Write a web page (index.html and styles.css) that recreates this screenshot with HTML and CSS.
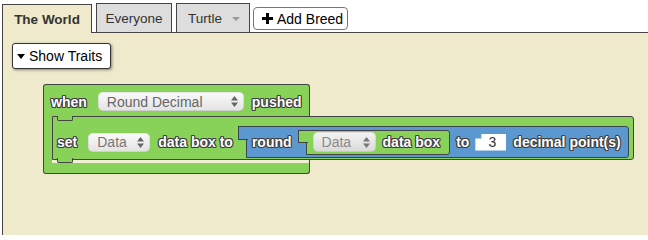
FILE: index.html
```html
<!DOCTYPE html>
<html>
<head>
<meta charset="utf-8">
<link rel="stylesheet" href="styles.css">
</head>
<body>
<div class="tabs">
  <div class="tab active">The World</div>
  <div class="tab everyone">Everyone</div>
  <div class="tab turtle"><span>Turtle</span><svg class="tcaret" width="8" height="4" viewBox="0 0 8 4"><path d="M0 0H8L4 4Z" fill="#999"/></svg></div>
  <button class="add-breed"><svg width="11" height="11" viewBox="0 0 11 11"><path d="M4 0H7V4H11V7H7V11H4V7H0V4H4Z" fill="#000"/></svg><span>Add Breed</span></button>
</div>
<div class="content">
  <button class="show-traits"><svg width="8" height="5" viewBox="0 0 8 5"><path d="M0 0H8L4 5Z" fill="#000"/></svg><span>Show Traits</span></button>
  <div class="when">
    <div class="when-top">
      <span class="lbl">when</span>
      <div class="dd dd-event"><span>Round Decimal</span><svg width="7" height="11" viewBox="0 0 7 11"><path d="M0 4.5L3.5 0L7 4.5Z M0 6.5L3.5 11L7 6.5Z" fill="#666"/></svg></div>
      <span class="lbl pushed">pushed</span>
    </div>
    <div class="middle">
      <div class="arm"></div>
      <div class="set">
        <span class="lbl">set</span>
        <div class="dd dd-data"><span>Data</span><svg width="7" height="11" viewBox="0 0 7 11"><path d="M0 4.5L3.5 0L7 4.5Z M0 6.5L3.5 11L7 6.5Z" fill="#666"/></svg></div>
        <span class="lbl databoxto">data box to</span>
        <div class="round">
          <span class="lbl">round</span>
          <div class="datablock">
            <div class="dd dd-inner"><span>Data</span><svg width="7" height="11" viewBox="0 0 7 11"><path d="M0 4.5L3.5 0L7 4.5Z M0 6.5L3.5 11L7 6.5Z" fill="#777"/></svg></div>
            <span class="lbl">data box</span>
          </div>
          <span class="lbl to">to</span>
          <div class="num">3</div>
          <span class="lbl dp">decimal point(s)</span>
        </div>
      </div>
    </div>
    <div class="bottom"></div>
  </div>
</div>
</body>
</html>
```
FILE: styles.css
```css
* { box-sizing: border-box; }
body {
  margin: 0;
  width: 648px;
  height: 235px;
  overflow: hidden;
  background: #fff;
  font-family: "Liberation Sans", Arial, sans-serif;
}
.tabs {
  display: flex;
  align-items: flex-end;
  height: 32px;
  padding-left: 2px;
}
.tab {
  height: 29px;
  border: 1px solid #444;
  border-bottom: none;
  background: #dddddd;
  color: #333;
  font-size: 13.5px;
  display: flex;
  align-items: center;
  justify-content: center;
  margin-right: 4px;
}
.tab.active {
  width: 90px;
  margin-bottom: -1px;
  background: #efeacb;
  font-weight: bold;
  position: relative;
  z-index: 1;
}
.tab.everyone { width: 76px; }
.tab.turtle {
  width: 74px;
  justify-content: space-between;
  padding: 0 9px 0 11px;
  margin-right: 3px;
}
.tcaret { margin-top: 1px; }
.add-breed {
  width: 95px;
  height: 23px;
  margin-bottom: 2px;
  display: flex;
  align-items: center;
  gap: 4px;
  padding: 0 0 0 8px;
  background: #fff;
  border: 1px solid #777;
  border-radius: 4px;
  font-family: "Liberation Sans", Arial, sans-serif;
  font-size: 14px;
  color: #000;
}
.content {
  position: relative;
  margin-left: 2px;
  height: 203px;
  border-left: 1px solid #444;
  border-top: 1px solid #444;
  background: #efeacb;
  padding: 10px 0 0 9px;
}
.show-traits {
  width: 99px;
  height: 26px;
  display: flex;
  align-items: center;
  gap: 4px;
  padding: 0 0 0 4px;
  background: #fff;
  border: 1px solid #333;
  border-radius: 3px;
  box-shadow: 1px 1px 3px rgba(0,0,0,0.45);
  font-family: "Liberation Sans", Arial, sans-serif;
  font-size: 14px;
  color: #000;
}
.lbl {
  color: #fff;
  font-weight: bold;
  font-size: 14px;
  white-space: nowrap;
  text-shadow: -1px 0 #3a3a3a, 1px 0 #3a3a3a, 0 -1px #3a3a3a, 0 1px #3a3a3a,
    -1px -1px #555, 1px 1px #555, -1px 1px #555, 1px -1px #555;
}
.when {
  position: absolute;
  left: 40px;
  top: 51px;
  display: flex;
  flex-direction: column;
  align-items: flex-start;
}
.when-top {
  width: 267px;
  height: 32px;
  background: #89d25a;
  border: 1px solid #444;
  border-bottom: none;
  border-radius: 3px 3px 0 0;
  display: flex;
  align-items: center;
  padding: 2px 0 0 7px;
}
.dd {
  display: flex;
  align-items: center;
  justify-content: space-between;
  height: 19px;
  border-radius: 5px;
  background: linear-gradient(#fbfbfb, #e2e2e2);
  box-shadow: inset 0 0 0 1px rgba(0,0,0,0.08);
  font-size: 14px;
  color: #666;
  padding: 0 6px 0 9px;
}
.dd-event { width: 146px; margin-left: 11px; }
.pushed { margin-left: 8px; }
.middle { display: flex; }
.arm {
  width: 9px;
  background: #89d25a;
  border-left: 1px solid #444;
}
.set {
  position: relative;
  display: flex;
  align-items: center;
  background: #89d25a;
  border: 1px solid #444;
  border-radius: 0 3px 3px 0;
  padding: 9px 4px 1px 4px;
}
.set::before {
  content: "";
  position: absolute;
  left: 4px;
  top: -1px;
  width: 14px;
  height: 4px;
  background: #89d25a;
  border: 1px solid #444;
  border-top: none;
  border-radius: 0 0 2px 2px;
}
.set::after {
  content: "";
  position: absolute;
  left: 4px;
  bottom: -4px;
  width: 14px;
  height: 4px;
  background: #89d25a;
  border: 1px solid #444;
  border-top: none;
  border-radius: 0 0 2px 2px;
}
.dd-data { width: 62px; margin-left: 11px; color: #777; }
.databoxto { margin-left: 8px; }
.round {
  position: relative;
  display: flex;
  align-items: center;
  height: 32px;
  margin-left: 13px;
  padding: 0 7px 0 5px;
  background: #5b98d0;
  border: 1px solid #3a4552;
  border-radius: 0 3px 3px 0;
}
.round::before {
  content: "";
  position: absolute;
  left: -9px;
  top: -1px;
  width: 9px;
  height: 12px;
  background: #5b98d0;
  border: 1px solid #3a4552;
  border-right: none;
}
.datablock {
  position: relative;
  display: flex;
  align-items: center;
  gap: 7px;
  height: 25px;
  margin-left: 14px;
  padding: 0 9px 0 6px;
  background: #89d25a;
  border: 1px solid #444;
  border-radius: 0 3px 3px 0;
}
.datablock::before {
  content: "";
  position: absolute;
  left: -9px;
  top: -1px;
  width: 9px;
  height: 11px;
  background: #89d25a;
  border: 1px solid #444;
  border-right: none;
}
.dd-inner {
  width: 63px;
  height: 20px;
  color: #8a8a8a;
  background: linear-gradient(#f4f4f4, #d9d9d9);
}
.to { margin-left: 6px; }
.num {
  width: 31px;
  height: 17px;
  margin-left: 6px;
  background: #fff;
  color: #333;
  font-size: 14px;
  display: flex;
  align-items: center;
  justify-content: center;
  padding-left: 3px;
  clip-path: polygon(0 5px, 6px 5px, 6px 0, 100% 0, 100% 100%, 0 100%);
}
.dp { margin-left: 7px; }
.bottom {
  width: 267px;
  height: 14px;
  border: 1px solid #444;
  border-top: none;
  border-radius: 0 0 3px 3px;
  background: linear-gradient(#f3efd6, #f3efd6) 8px 0 / calc(100% - 8px) 3px no-repeat, #89d25a;
}
```
